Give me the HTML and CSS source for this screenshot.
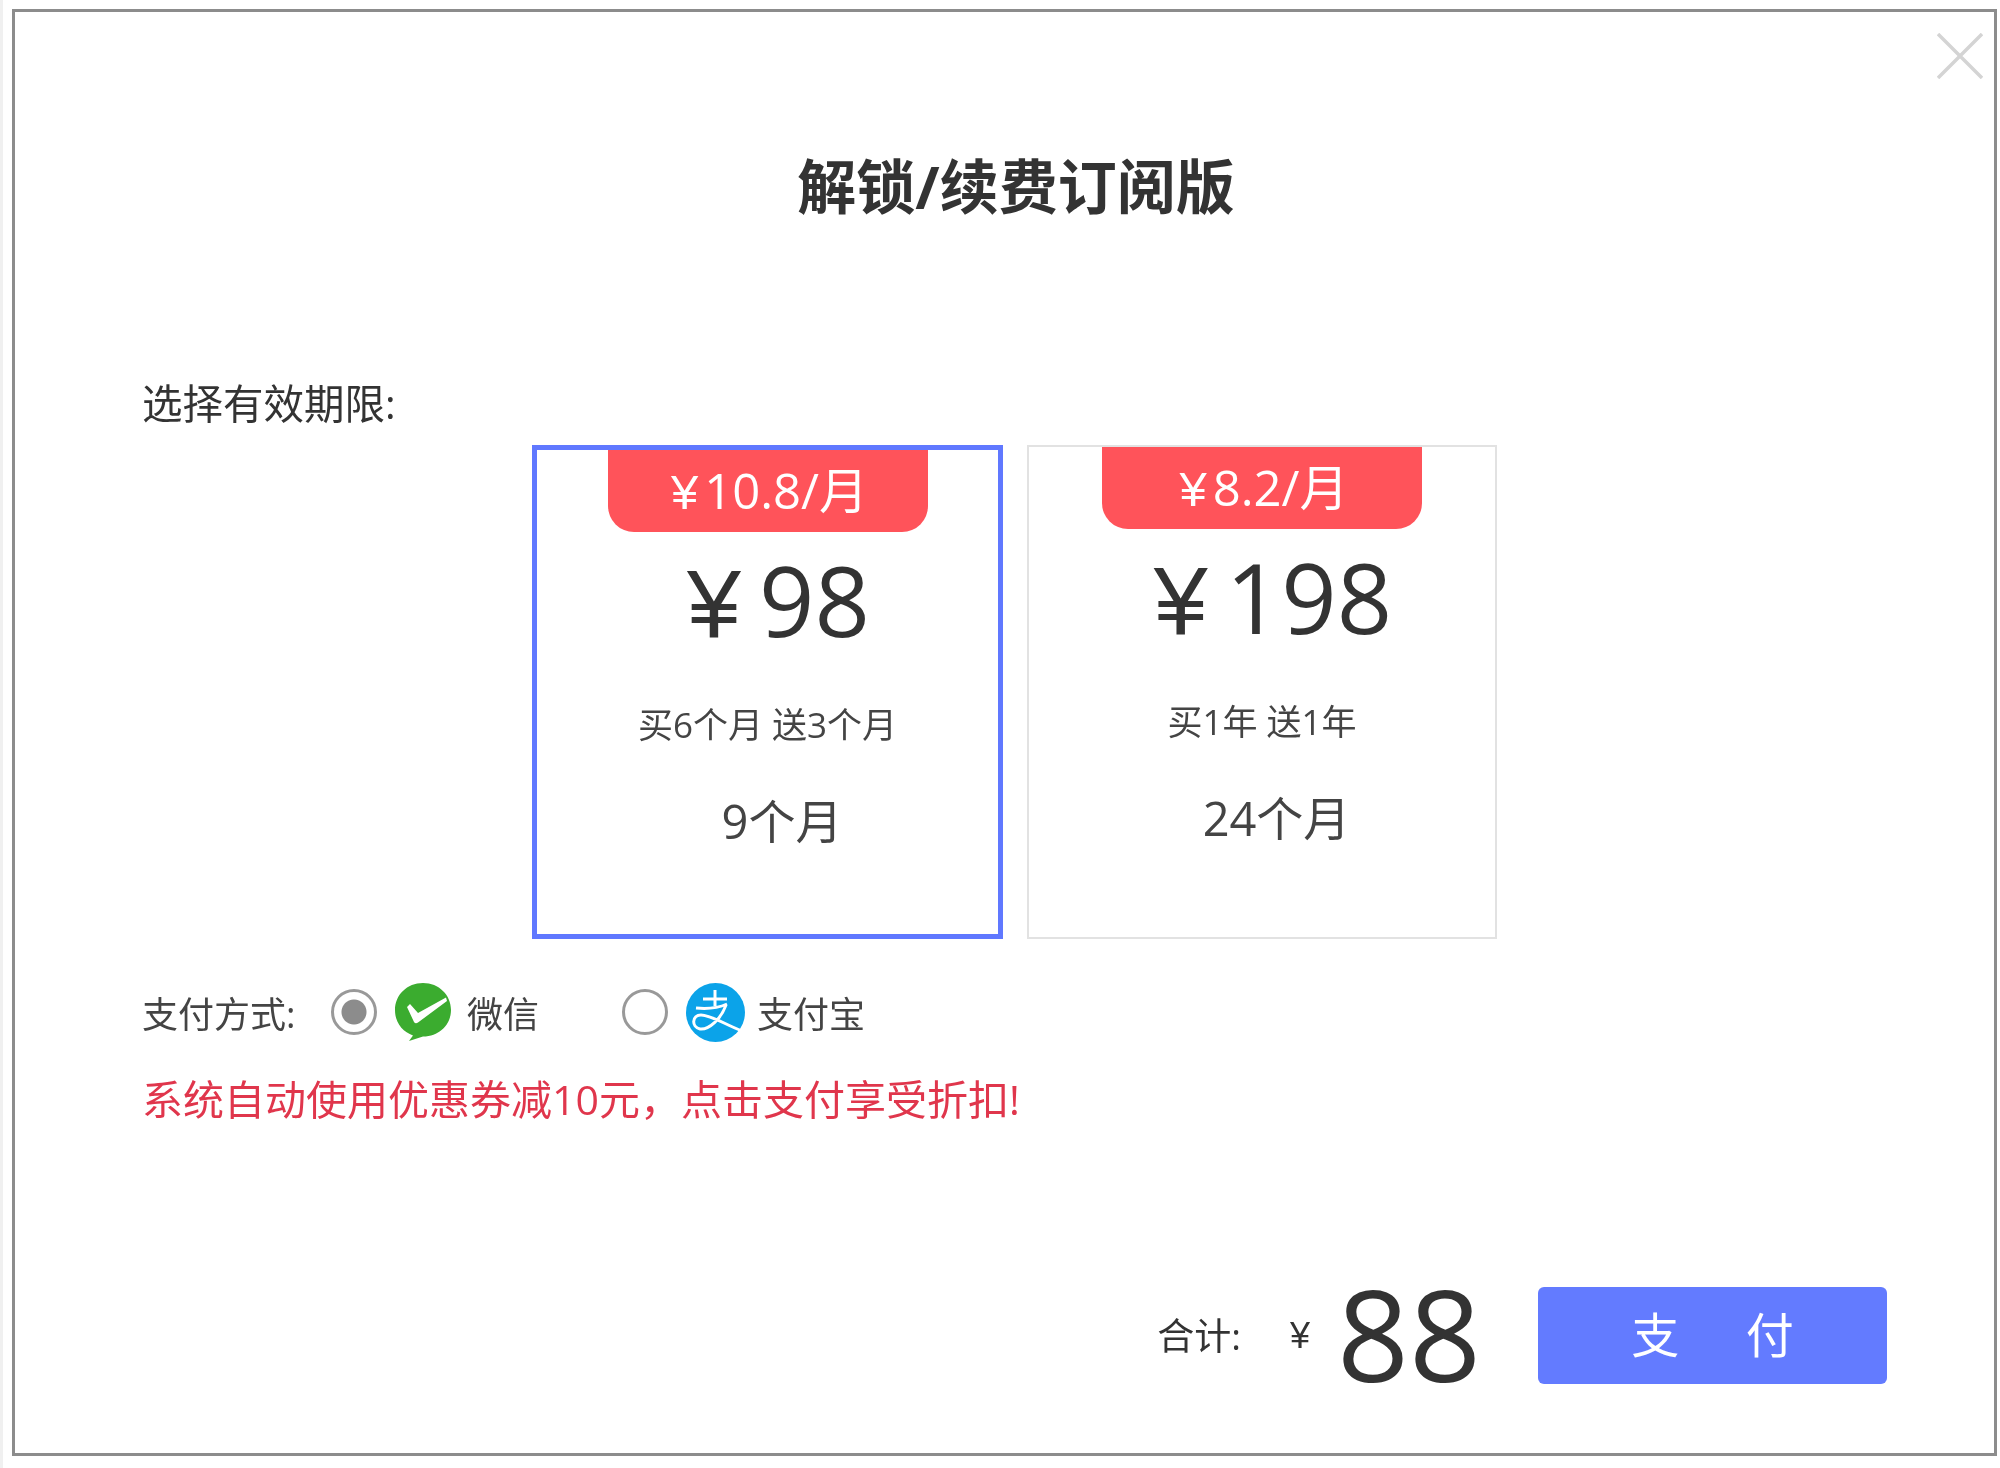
FILE: index.html
```html
<!DOCTYPE html>
<html lang="zh-CN">
<head>
<meta charset="utf-8">
<title>解锁/续费订阅版</title>
<link rel="stylesheet" href="styles.css">
</head>
<body>
<main class="dialog">
  <svg class="close" viewBox="0 0 46 46" width="46" height="46"><path d="M1 1L45 45M45 1L1 45"/></svg>
  <h1 class="title">解锁/续费订阅版</h1>
  <p class="label">选择有效期限:</p>
  <div class="plans">
    <section class="plan plan-active">
      <div class="badge"><span class="yen">¥</span>10.8/月</div>
      <div class="price"><span class="yen">¥</span>98</div>
      <div class="offer">买6个月 送3个月</div>
      <div class="duration">9个月</div>
    </section>
    <section class="plan">
      <div class="badge"><span class="yen">¥</span>8.2/月</div>
      <div class="price"><span class="yen">¥</span>198</div>
      <div class="offer">买1年 送1年</div>
      <div class="duration">24个月</div>
    </section>
  </div>
  <div class="pay-row">
    <span class="pay-label">支付方式:</span>
    <span class="radio radio-on"></span>
    <svg class="pay-icon" viewBox="0 0 58 58" width="58" height="58">
      <path class="wx" d="M29 0C13 0 1 12 1 27C1 40 9 49 19 52.500L15 58L29 53.500C46 53.500 57 41 57 27C57 12 45 0 29 0Z"/>
      <path class="wx-check" d="M13 24L20 39C21 40.500 22.500 40.500 24 39.500L53 18L52 14.500L24 30L16 21Z"/>
    </svg>
    <span class="pay-name pay-name-wx">微信</span>
    <span class="radio radio-second"></span>
    <svg class="pay-icon pay-icon-ali" viewBox="0 0 59 59" width="59" height="59">
      <circle class="ali" cx="29.500" cy="29.500" r="29.500"/>
      <path class="ali-mark" d="M29 7V23M17 16H41M10 25C20 26 32 25 41 21M40 22C35 36 23 47 14 46C5 44 6 32 15 32C25 32 38 41 56 48"/>
    </svg>
    <span class="pay-name pay-name-ali">支付宝</span>
  </div>
  <p class="notice">系统自动使用优惠券减10元&#xFF0C;点击支付享受折扣!</p>
  <div class="footer">
    <span class="total-label">合计:</span>
    <span class="currency">¥</span>
    <span class="amount">88</span>
    <button class="pay-button" type="button">支 付</button>
  </div>
</main>
</body>
</html>
```
FILE: styles.css
```css
* {
  box-sizing: border-box;
}

html,
body {
  margin: 0;
  height: 1468px;
  overflow: hidden;
  background: #fff;
}

body {
  padding: 9px 0 0 9px;
  border-left: 3px solid #f0f0f0;
  font-family: "Open Sans", "Noto Sans CJK SC", sans-serif;
  color: #333;
}

.dialog {
  position: relative;
  width: 1985px;
  height: 1447px;
  padding: 144px 104px 0 127px;
  border: 3px solid #8c8c8c;
  background: #fff;
  filter: blur(0.6px);
}

.close {
  position: absolute;
  top: 21px;
  right: 11px;
}

.close path {
  fill: none;
  stroke: #d4d4d4;
  stroke-width: 3.500;
}

.title {
  margin: 0;
  font-size: 59px;
  line-height: 60px;
  font-weight: 700;
  text-align: center;
}

.label {
  margin: 167px 0 0;
  font-size: 40.500px;
  line-height: 42px;
}

.plans {
  display: flex;
  gap: 24px;
  margin: 20px 0 0 390px;
}

.plan {
  width: 470px;
  height: 494px;
  border: 2px solid #e2e2e2;
  text-align: center;
}

.plan-active {
  width: 471px;
  border: 5px solid #6078ff;
}

.plan .badge {
  margin: 0 auto;
  width: 320px;
  height: 82px;
  padding-left: 4px;
  border-radius: 0 0 26px 26px;
  background: #ff535a;
  color: #fff;
  font-size: 49px;
  line-height: 80px;
}

.yen {
  margin-right: 6px;
  font-family: "Liberation Sans", sans-serif;
}

.price {
  height: 100px;
  margin-top: 17px;
  padding-left: 22px;
  font-size: 97px;
  line-height: 100px;
}

.price .yen {
  margin-right: 18px;
}

.offer {
  margin-top: 54px;
  font-size: 35px;
  line-height: 44px;
  color: #444;
}

.duration {
  margin-top: 49px;
  padding-left: 29px;
  font-size: 47px;
  line-height: 50px;
  color: #444;
}

.pay-row {
  display: flex;
  align-items: center;
  height: 58px;
  margin-top: 44px;
  font-size: 36px;
  color: #444;
}

.pay-label {
  width: 189px;
}

.radio {
  width: 46px;
  height: 46px;
  border: 3px solid #999;
  border-radius: 50%;
  background: #fff;
}

.radio-on {
  background: radial-gradient(circle, #8c8c8c 0 12px, #fff 13px);
}

.radio-second {
  margin-left: 83px;
}

.pay-icon {
  margin-left: 17px;
}

.pay-icon-ali {
  margin-left: 18px;
}

.wx {
  fill: #3bac2f;
}

.wx-check {
  fill: #fff;
}

.ali {
  fill: #0ba3e9;
}

.ali-mark {
  fill: none;
  stroke: #fff;
  stroke-width: 3;
}

.pay-name-wx {
  width: 72px;
  margin-left: 15px;
}

.pay-name-ali {
  margin-left: 12px;
}

.notice {
  margin: 36px 0 0;
  font-size: 41px;
  line-height: 44px;
  color: #e0364c;
}

.footer {
  display: flex;
  align-items: center;
  justify-content: flex-end;
  height: 97px;
  margin: 166px 3px 0 0;
}

.total-label {
  margin-bottom: 3px;
  font-size: 37px;
}

.currency {
  margin-left: 49px;
  font-family: "Liberation Sans", sans-serif;
  font-size: 36px;
}

.amount {
  margin: 0 0 4px 27px;
  font-size: 126px;
  line-height: 93px;
}

.pay-button {
  width: 349px;
  height: 97px;
  margin-left: 57px;
  padding: 0 0 8px;
  border: 0;
  border-radius: 6px;
  background: #637bff;
  color: #fff;
  font-family: inherit;
  font-size: 48px;
  word-spacing: 54px;
}
```
